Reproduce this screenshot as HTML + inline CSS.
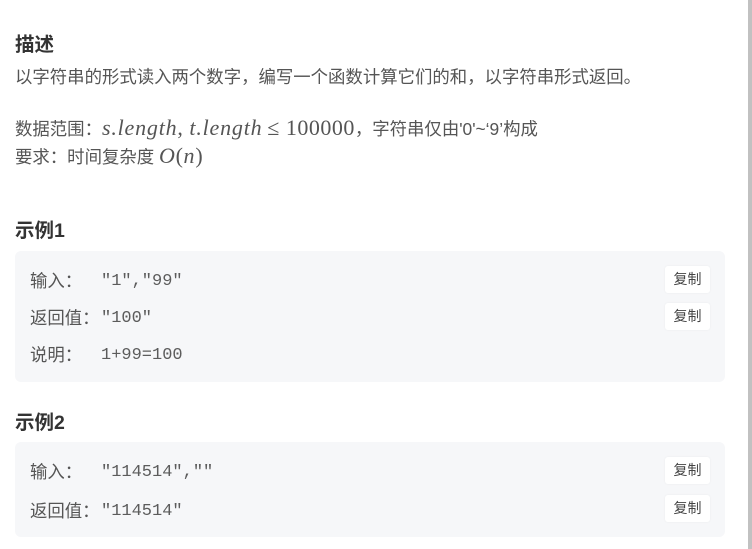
<!DOCTYPE html>
<html><head><meta charset="utf-8"><style>
body{margin:0;width:752px;height:549px;overflow:hidden;background:#fff;font-family:"Liberation Sans","Noto Sans CJK SC",sans-serif;color:#555;position:relative}
.a{position:absolute;white-space:nowrap}
h{position:absolute;font-weight:bold;font-size:19.5px;color:#333;left:15px}
.t{font-size:17.4px;left:15px}
.m{font-family:"Liberation Serif","DejaVu Serif",serif;font-style:italic;font-size:22px;letter-spacing:0.8px}
.r{font-family:"Liberation Serif",serif;font-size:22px;letter-spacing:0.5px}
.box{position:absolute;left:15px;width:710px;background:#f6f7f9;border-radius:6px}
.row{position:absolute;left:15px;font-size:17.4px;color:#555}
.row span{font-family:"Liberation Mono","DejaVu Sans Mono",monospace;font-size:17px;color:#5c5c5c;position:absolute;left:71px;top:4px}
.btn{position:absolute;left:650px;width:45px;height:27px;background:#fff;border-radius:3px;font-size:14px;line-height:27px;text-align:center;color:#444;box-shadow:0 0 2px rgba(0,0,0,.05)}
.sb{position:absolute;right:0;top:0;width:4px;height:549px;background:#c1c1c1}
</style></head><body>
<h style="top:28px">描述</h>
<div class="a t" style="top:64px">以字符串的形式读入两个数字，编写一个函数计算它们的和，以字符串形式返回。</div>
<div class="a t" style="top:115px">数据范围：<span class="m">s.length</span><span class="r">, </span><span class="m">t.length</span> <span class="r">≤ 100000</span>，字符串仅由'0'~‘9’构成</div>
<div class="a t" style="top:143px">要求：时间复杂度 <span class="m">O</span><span class="r">(</span><span class="m">n</span><span class="r">)</span></div>
<h style="top:214px">示例1</h>
<div class="box" style="top:251px;height:131px">
<div class="a row" style="top:17px">输入：<span>"1","99"</span></div>
<div class="btn" style="top:15px">复制</div>
<div class="a row" style="top:54px">返回值：<span>"100"</span></div>
<div class="btn" style="top:52px">复制</div>
<div class="a row" style="top:91px">说明：<span>1+99=100</span></div>
</div>
<h style="top:406px">示例2</h>
<div class="box" style="top:442px;height:95px">
<div class="a row" style="top:17px">输入：<span>"114514",""</span></div>
<div class="btn" style="top:15px">复制</div>
<div class="a row" style="top:56px">返回值：<span>"114514"</span></div>
<div class="btn" style="top:53px">复制</div>
</div>
<div class="sb"></div>
</body></html>
